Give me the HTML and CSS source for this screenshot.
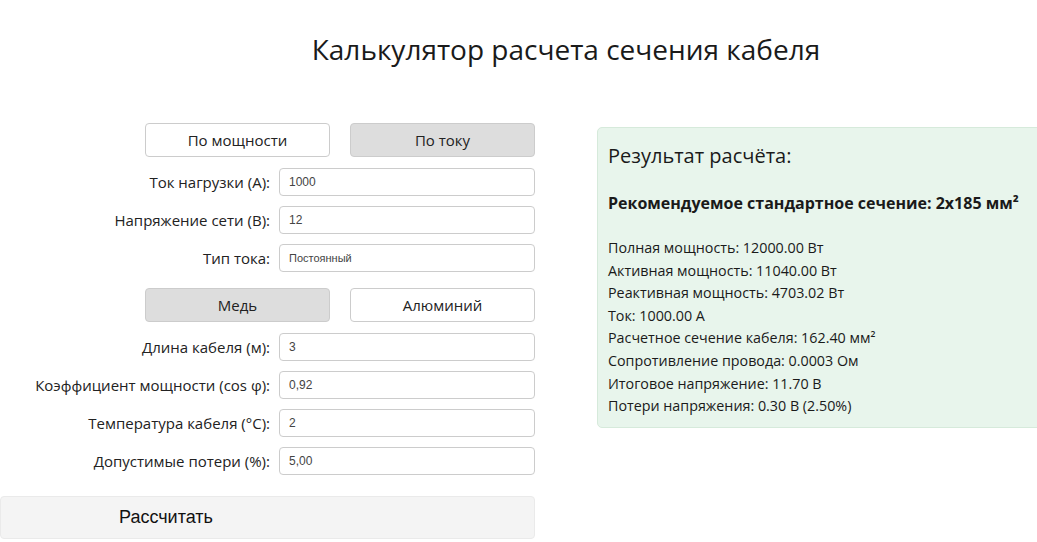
FILE: index.html
```html
<!DOCTYPE html>
<html lang="ru">
<head>
  <meta charset="UTF-8">
  <meta name="viewport" content="width=device-width, initial-scale=1.0">
  <title>Калькулятор сечения кабеля</title>
  <link rel="stylesheet" href="styles.css">
</head>
<body>
  <h1 class="title">Калькулятор расчета сечения кабеля</h1>

  <div class="layout">
    <form class="calc-form" id="calcForm">
      <div class="toggle">
        <button type="button" class="toggle-btn">По мощности</button>
        <button type="button" class="toggle-btn active">По току</button>
      </div>

      <div class="form-row">
        <label for="current">Ток нагрузки (А):</label>
        <input type="text" id="current" value="1000">
      </div>
      <div class="form-row">
        <label for="voltage">Напряжение сети (В):</label>
        <input type="text" id="voltage" value="12">
      </div>
      <div class="form-row">
        <label for="type">Тип тока:</label>
        <input type="text" id="type" class="select" value="Постоянный">
      </div>

      <div class="toggle toggle-material">
        <button type="button" class="toggle-btn active">Медь</button>
        <button type="button" class="toggle-btn">Алюминий</button>
      </div>

      <div class="form-row">
        <label for="length">Длина кабеля (м):</label>
        <input type="text" id="length" value="3">
      </div>
      <div class="form-row">
        <label for="cosphi">Коэффициент мощности (cos φ):</label>
        <input type="text" id="cosphi" value="0,92">
      </div>
      <div class="form-row">
        <label for="temp">Температура кабеля (°C):</label>
        <input type="text" id="temp" value="2">
      </div>
      <div class="form-row">
        <label for="loss">Допустимые потери (%):</label>
        <input type="text" id="loss" value="5,00">
      </div>

      <button type="submit" class="calc-btn">Рассчитать</button>
    </form>

    <div class="result">
      <h2>Результат расчёта:</h2>
      <p class="recommended">Рекомендуемое стандартное сечение: 2x185 мм²</p>
      <ul class="result-list">
        <li>Полная мощность: 12000.00 Вт</li>
        <li>Активная мощность: 11040.00 Вт</li>
        <li>Реактивная мощность: 4703.02 Вт</li>
        <li>Ток: 1000.00 А</li>
        <li>Расчетное сечение кабеля: 162.40 мм²</li>
        <li>Сопротивление провода: 0.0003 Ом</li>
        <li>Итоговое напряжение: 11.70 В</li>
        <li>Потери напряжения: 0.30 В (2.50%)</li>
      </ul>
    </div>
  </div>
</body>
</html>
```

FILE: styles.css
```css
body {
  margin: 0;
  padding: 0;
  font-family: 'Open Sans', 'Noto Sans', sans-serif;
  color: #1a1a1a;
  background: #fff;
  overflow: hidden;
}

.title {
  margin: 30px 0 0;
  padding-left: 95px;
  text-align: center;
  font-size: 28px;
  font-weight: 400;
  line-height: 38px;
}

.layout {
  display: flex;
  align-items: flex-start;
  gap: 62px;
  margin-top: 55px;
}

.calc-form {
  width: 535px;
  flex-shrink: 0;
  display: flex;
  flex-direction: column;
}

.toggle {
  display: flex;
  justify-content: flex-end;
  gap: 20px;
  margin-bottom: 11px;
}

.toggle-material {
  margin-top: 6px;
}

.toggle-btn {
  width: 185px;
  height: 34px;
  border: 1px solid #ccc;
  border-radius: 4px;
  background: #fff;
  font-family: 'Open Sans', sans-serif;
  font-size: 15px;
  color: #222;
  cursor: pointer;
}

.toggle-btn.active {
  background: #ddd;
}

.form-row {
  display: grid;
  grid-template-columns: 1fr 256px;
  column-gap: 9px;
  align-items: center;
  margin-bottom: 10px;
}

.form-row label {
  text-align: right;
  font-size: 15px;
  color: #222;
}

.form-row input {
  height: 28px;
  box-sizing: border-box;
  padding: 0 9px;
  border: 1px solid #ccc;
  border-radius: 4px;
  font-family: 'Liberation Sans', Arial, sans-serif;
  font-size: 12px;
  color: #444;
}

.form-row input.select {
  font-size: 11px;
}

.calc-btn {
  margin-top: 11px;
  height: 43px;
  border: 1px solid #eaeaea;
  border-radius: 4px;
  background: #f4f4f4;
  text-align: left;
  padding-left: 118px;
  font-family: 'Liberation Sans', Arial, sans-serif;
  font-size: 18px;
  color: #111;
  cursor: pointer;
}

.result {
  flex-shrink: 0;
  width: 480px;
  margin-top: 4px;
  box-sizing: border-box;
  padding: 14px 10px 9px;
  background: #e8f5ec;
  border: 1px solid #d6eadb;
  border-radius: 5px;
}

.result h2 {
  margin: 0;
  font-size: 20px;
  font-weight: 400;
  line-height: 28px;
}

.recommended {
  margin: 22px 0 23px;
  font-size: 16px;
  font-weight: 700;
  line-height: 22px;
}

.result-list {
  list-style: none;
  margin: 0;
  padding: 0;
  font-size: 14.3px;
  line-height: 22.6px;
}
```
